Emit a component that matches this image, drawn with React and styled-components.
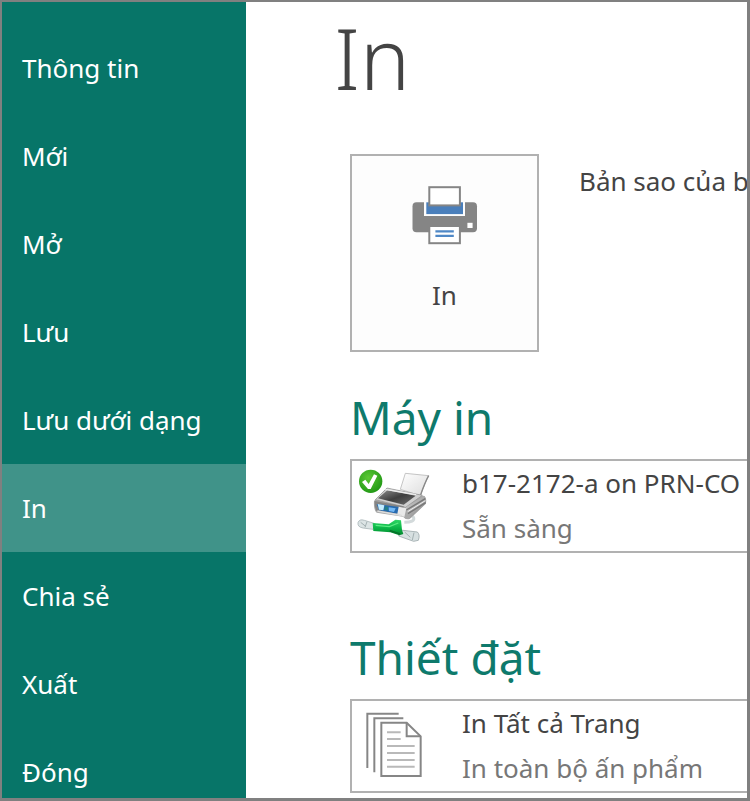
import { useState } from 'react';
import styled, { createGlobalStyle } from 'styled-components';

const menuItems = ['Thông tin', 'Mới', 'Mở', 'Lưu', 'Lưu dưới dạng', 'In', 'Chia sẻ', 'Xuất', 'Đóng'];

const PrintIcon = () => (
    <svg width="66" height="60" viewBox="412 185 66 60" aria-hidden="true">
        <rect x="412.5" y="202.3" width="64.5" height="30" rx="4" fill="#858585" />
        <rect x="424" y="201" width="41" height="15" fill="#fdfdfd" />
        <rect x="426.3" y="202.3" width="36.7" height="11.8" fill="#4a7fbb" />
        <rect x="429.3" y="187.2" width="30.6" height="18.2" fill="#fff" stroke="#858585" strokeWidth="2" />
        <rect x="467.4" y="222.8" width="5.2" height="5.2" fill="#fff" />
        <rect x="429.3" y="226" width="30.6" height="17.2" fill="#fff" stroke="#858585" strokeWidth="2" />
        <path d="M435.4 231.3H453.8M435.4 235.8H453.8" stroke="#4f88c6" strokeWidth="2.2" />
    </svg>
);

const NetworkPrinterIcon = () => (
    <svg width="76" height="76" viewBox="18 24 228 228" aria-hidden="true">
        <defs>
            <linearGradient id="sheet" x1="0" y1="0" x2="1" y2="1">
                <stop offset="0" stopColor="#ffffff" />
                <stop offset="1" stopColor="#dcdcdc" />
            </linearGradient>
            <linearGradient id="lid" x1="0" y1="0" x2="1" y2="1">
                <stop offset="0" stopColor="#8d8d8d" />
                <stop offset="0.5" stopColor="#3f3f3f" />
                <stop offset="1" stopColor="#6e6e6e" />
            </linearGradient>
            <linearGradient id="side" x1="0" y1="0" x2="1" y2="1">
                <stop offset="0" stopColor="#d6d6d6" />
                <stop offset="1" stopColor="#7e7e7e" />
            </linearGradient>
            <linearGradient id="cable" x1="0" y1="0" x2="0" y2="1">
                <stop offset="0" stopColor="#2fd765" />
                <stop offset="0.55" stopColor="#0bb446" />
                <stop offset="1" stopColor="#03852d" />
            </linearGradient>
            <radialGradient id="badge" cx="0.4" cy="0.35" r="0.7">
                <stop offset="0" stopColor="#5cc934" />
                <stop offset="1" stopColor="#1f9614" />
            </radialGradient>
        </defs>
        <path d="M166 40L236 47Q225 67 211 107L151 88Z" fill="url(#sheet)" stroke="#b9b9b9" strokeWidth="2.5" />
        <path d="M236 47Q225 67 211 107L201 104" fill="none" stroke="#888" strokeWidth="4" />
        <path d="M163 187Q195 187 191 173Q188 164 170 166" fill="none" stroke="#d3dadb" strokeWidth="9" />
        <path d="M72 123L110 84L223 108Q232 115 227 132L179 177Q168 181 159 170L80 158Q70 150 72 123Z" fill="#a9a9a9" />
        <path d="M76 119L111 84L217 106L167 142Z" fill="#cfcfcf" stroke="#929292" strokeWidth="2" />
        <path d="M84 115L112 91L197 107L161 134Z" fill="url(#lid)" />
        <path d="M106 88L198 104" stroke="#eeeeee" strokeWidth="4" />
        <path d="M167 142L224 108L228 130L181 174Z" fill="url(#side)" />
        <path d="M169 150L226 116M174 161L227 128" stroke="#777" strokeWidth="4" />
        <path d="M173 155L226 122" stroke="#efefef" strokeWidth="3" />
        <path d="M74 123L161 139L160 166L80 153Q73 144 74 123Z" fill="#858585" />
        <path d="M80 132L148 141L143 161L87 151Z" fill="#276aaf" />
        <path d="M83 132L103 136L100 151L87 149Z" fill="#c3ecff" />
        <path d="M116 142L137 145L132 156L117 153Z" fill="#74b8f4" />
        <path d="M105 139L115 141L113 152L103 149Z" fill="#237e83" />
        <path d="M146 140L169 145L163 171L142 162Z" fill="#e9e9e9" />
        <path d="M82 153L154 166" stroke="#ddd" strokeWidth="5" />
        <path d="M24 188Q28 176 43 181L75 191L69 208L39 204Q22 201 24 188Z" fill="#dce4e5" stroke="#aab6b8" strokeWidth="2.5" />
        <path d="M32 187L47 199M51 185L45 202" stroke="#a3b0b2" strokeWidth="3" />
        <path d="M151 210L202 216Q211 224 205 241L191 244L146 228Z" fill="#d7e0e1" stroke="#9daaac" strokeWidth="2.5" />
        <path d="M164 216L181 232M192 218L187 240" stroke="#a3b0b2" strokeWidth="3" />
        <path d="M68 189L116 193L136 179L153 181L156 210L160 222L148 226L121 217L70 213Z" fill="url(#cable)" />
        <path d="M77 196L118 200L145 189" fill="none" stroke="#59ec82" strokeWidth="4" />
        <path d="M119 212L150 222" stroke="#067329" strokeWidth="5" />
        <circle cx="62" cy="64" r="35" fill="url(#badge)" />
        <path d="M36 66L46 59L56 72L72 43L82 47L62 87H54Z" fill="#fff" />
    </svg>
);

const PagesIcon = () => (
    <svg width="76" height="76" viewBox="18 24 228 228" fill="none" aria-hidden="true">
        <path d="M52 204V41H146M73 217V55H160" stroke="#868686" strokeWidth="6" />
        <path d="M94 68H170L212 109V228H94Z" fill="#fff" stroke="#868686" strokeWidth="6" />
        <path d="M170 68V109H212" stroke="#868686" strokeWidth="6" />
        <path d="M111 97H152M111 117H152M111 138H194M111 159H194M111 180H194M111 200H194" stroke="#b9b9b9" strokeWidth="6" />
    </svg>
);

const Picker = ({ icon, title, detail }) => (
    <PickerButton type="button">
        {icon}
        <PickerText>
            <span>{title}</span>
            <PickerDetail>{detail}</PickerDetail>
        </PickerText>
    </PickerButton>
);

const App = () => {
    const [active, setActive] = useState('In');

    return (
        <Window>
            <GlobalStyle />
            <Sidebar>
                {menuItems.map(item => (
                    <MenuItem key={item} type="button" $active={item === active} onClick={() => setActive(item)}>
                        {item}
                    </MenuItem>
                ))}
            </Sidebar>
            <Content>
                <Title>In</Title>
                <PrintRow>
                    <PrintButton type="button">
                        <PrintIcon />
                        In
                    </PrintButton>
                    <Copies>Bản sao của b</Copies>
                </PrintRow>
                <Section>
                    <SectionTitle>Máy in</SectionTitle>
                    <Picker icon={<NetworkPrinterIcon />} title="b17-2172-a on PRN-CO" detail="Sẵn sàng" />
                </Section>
                <Section>
                    <SectionTitle>Thiết đặt</SectionTitle>
                    <Picker icon={<PagesIcon />} title="In Tất cả Trang" detail="In toàn bộ ấn phẩm" />
                </Section>
            </Content>
        </Window>
    );
};

export default App;

const GlobalStyle = createGlobalStyle`
    * {
        box-sizing: border-box;
    }

    body {
        margin: 0;
    }

    button {
        font: inherit;
        color: inherit;
        cursor: pointer;
    }
`;

const Window = styled.div`
    display: flex;
    height: 100vh;
    overflow: hidden;
    border: solid #808080;
    border-width: 2px 3px 3px 2px;
    background: #fff;
    color: #444;
    font-family: 'Noto Sans', sans-serif;
    font-size: 26px;
`;

const Sidebar = styled.nav`
    flex: 0 0 244px;
    display: flex;
    flex-direction: column;
    padding-top: 22px;
    overflow: hidden;
    background: #077568;
`;

const MenuItem = styled.button`
    flex: 0 0 88px;
    padding: 0 20px;
    border: 0;
    background: ${({ $active }) => $active ? '#409389' : 'transparent'};
    color: #fff;
    text-align: left;
    white-space: nowrap;
`;

const Content = styled.main`
    flex: 1;
    min-width: 0;
    padding-left: 104px;
    overflow: hidden;
    white-space: nowrap;
`;

const Title = styled.h1`
    margin: 0 0 40px -16px;
    font-size: 84px;
    line-height: 112px;
    font-weight: 300;
`;

const PrintRow = styled.div`
    display: flex;
    align-items: flex-start;
    gap: 40px;
    margin-bottom: 33px;
`;

const PrintButton = styled.button`
    flex: 0 0 189px;
    height: 198px;
    display: flex;
    flex-direction: column;
    align-items: center;
    gap: 32px;
    padding: 29px 0 0;
    border: 2px solid #b1b1b1;
    background: #fdfdfd;
`;

const Copies = styled.span`
    line-height: 54px;
`;

const Section = styled.section`
    margin-bottom: 72px;
`;

const SectionTitle = styled.h2`
    margin: 0 0 10px;
    color: #0e7a6c;
    font-size: 46px;
    line-height: 64px;
    font-weight: 400;
`;

const PickerButton = styled.button`
    width: 100%;
    height: 94px;
    display: flex;
    align-items: center;
    gap: 30px;
    padding: 0 4px;
    border: 2px solid #b1b1b1;
    border-right: 0;
    background: #fff;
    text-align: left;
`;

const PickerText = styled.span`
    display: flex;
    flex-direction: column;
    line-height: 45px;
`;

const PickerDetail = styled.span`
    color: #777;
`;
